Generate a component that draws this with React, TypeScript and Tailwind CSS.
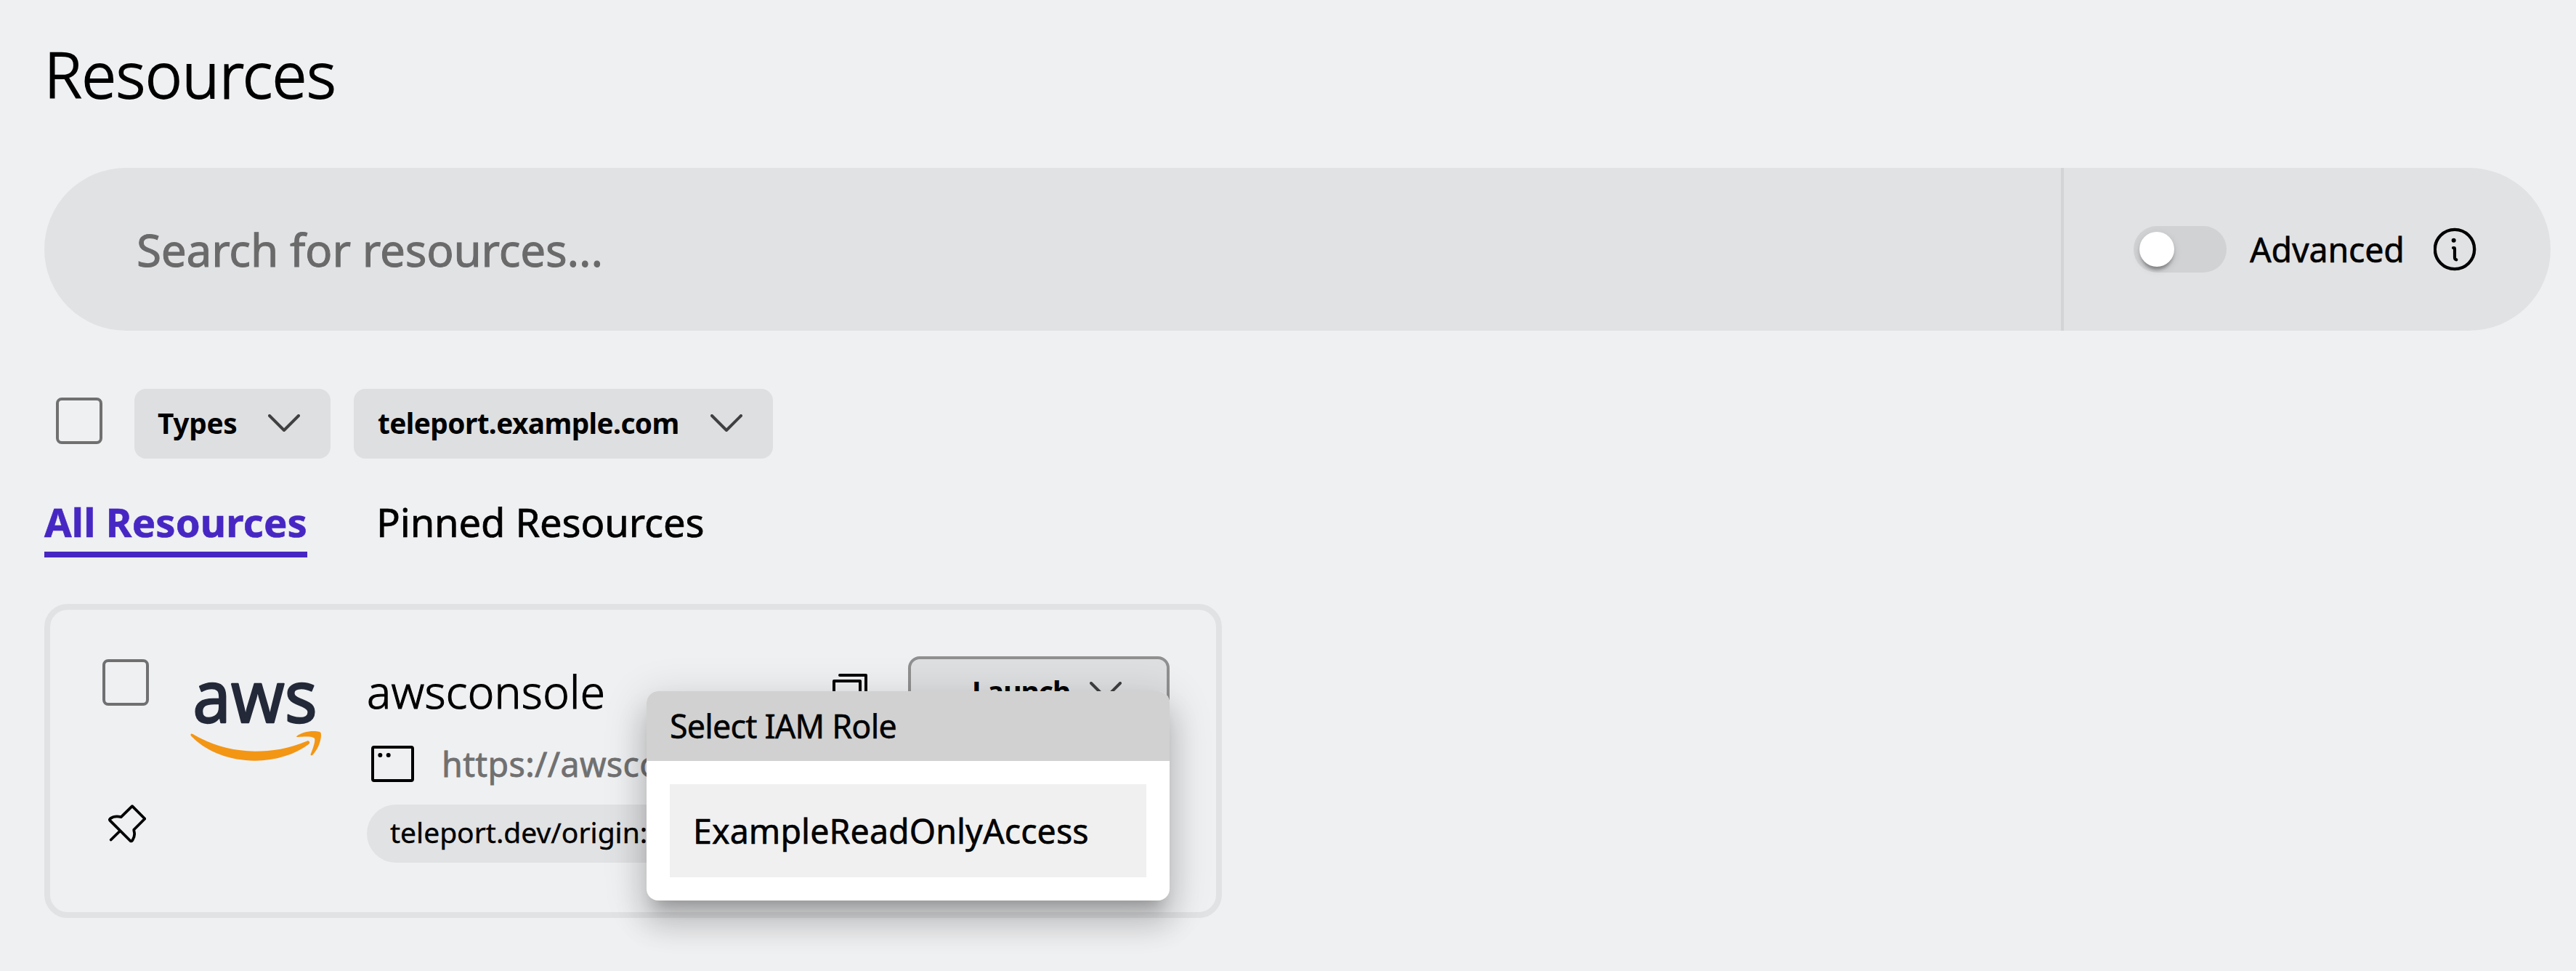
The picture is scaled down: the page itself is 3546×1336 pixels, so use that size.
import React from 'react';

function ChevronDown() {
  return (
    <svg className="h-6 w-11 shrink-0" viewBox="0 0 44 24" fill="none" stroke="#404041" strokeWidth="4" strokeLinecap="round" strokeLinejoin="round">
      <path d="M2 2 22 22 42 2" />
    </svg>
  );
}

function Checkbox({ className = '' }: { className?: string }) {
  return <div role="checkbox" aria-checked="false" className={`size-16 shrink-0 rounded-lg border-4 border-[#707071] ${className}`} />;
}

function InfoIcon() {
  return (
    <svg className="size-[60px] shrink-0" viewBox="0 0 180 180" fill="none" stroke="#000" strokeLinecap="round">
      <circle cx="87" cy="90" r="81.5" strokeWidth="13" />
      <circle cx="83" cy="53" r="9" fill="#000" stroke="none" />
      <path d="M81 84H84Q87 84 87 88V124Q87 132 94 133" strokeWidth="12.5" />
    </svg>
  );
}

function PinIcon() {
  return (
    <svg className="h-[53px] w-[52px]" viewBox="297 860 156 158" fill="none" stroke="#000" strokeWidth="11.5" strokeLinecap="round" strokeLinejoin="round">
      <path d="M396 866 448 918 403 963C402 974 413 982 397 1007Q392 1014 387 1008L304 925Q301 921 306 917C320 907 335 907 350 911Z" />
      <path d="M345 969 308 1005" />
    </svg>
  );
}

function AwsLogo() {
  return (
    <svg className="h-[112px] w-[182px] shrink-0 overflow-visible" viewBox="180 78 546 336">
      <text x="193" y="251" textLength="514" lengthAdjust="spacingAndGlyphs" fontFamily="Noto Sans, sans-serif" fontWeight="400" fontSize="298" fill="#232938" stroke="#232938" strokeWidth="7" strokeLinejoin="round">aws</text>
      <g fill="#f39614">
        <path d="M186 299C183 302 184 306 188 310C250 372 340 409 450 410C535 409 615 385 672 342C680 335 674 325 664 329C590 360 520 371 450 371C355 370 270 345 193 300C190 298 188 298 186 299Z" />
        <path d="M622 309C640 295 665 288 692 288C712 288 721 291 722 296C726 310 718 355 688 386C684 390 678 388 680 383C690 358 700 330 696 318C692 309 655 309 630 312C622 313 620 312 622 309Z" />
      </g>
    </svg>
  );
}

function WindowIcon() {
  return (
    <svg className="h-[50px] w-[59px] shrink-0" viewBox="0 0 177 150" fill="none">
      <rect x="6" y="6" width="165" height="138" rx="6" stroke="#000" strokeWidth="12" />
      <circle cx="37" cy="39" r="9" fill="#000" />
      <circle cx="71" cy="39" r="9" fill="#000" />
    </svg>
  );
}

function CopyIcon() {
  return (
    <svg className="ml-auto size-12 shrink-0" viewBox="0 0 48 48" fill="none" stroke="#000" strokeWidth="4" strokeLinecap="round" strokeLinejoin="round">
      <path d="M10 2H46V38" />
      <path d="M2 10H38V46H2Z" />
    </svg>
  );
}

function SearchBar() {
  return (
    <div className="mt-[81px] flex h-56 w-[3450px] overflow-hidden rounded-full bg-[#e1e2e4]">
      <div className="flex w-[2776px] items-center pl-[127px] text-[62px] leading-none tracking-[-0.2px] text-[#6a6a6b] [-webkit-text-stroke:1px]">Search for resources...</div>
      <div className="flex flex-1 items-center border-l-4 border-[#d3d4d6] pl-24">
        <div role="switch" aria-checked="false" className="flex h-16 w-32 items-center rounded-full bg-[#d1d2d4] pl-2">
          <div className="size-12 rounded-full bg-white shadow-[0_8px_4px_-4px_rgba(0,0,0,0.2),0_4px_4px_rgba(0,0,0,0.14),0_4px_12px_rgba(0,0,0,0.12)]" />
        </div>
        <span className="ml-8 w-[253px] text-[46.5px] leading-none tracking-[-0.15px] [-webkit-text-stroke:0.6px]">Advanced</span>
        <InfoIcon />
      </div>
    </div>
  );
}

function RoleMenu() {
  return (
    <div className="absolute top-[112px] left-[821px] w-[720px] rounded-2xl bg-white shadow-[0_20px_20px_-12px_rgba(0,0,0,0.2),0_32px_40px_4px_rgba(0,0,0,0.14),0_12px_56px_8px_rgba(0,0,0,0.12)]">
      <div className="flex h-24 items-center rounded-t-2xl bg-[#d1d1d1] pl-8 text-[44.8px] leading-none tracking-[-0.8px] [-webkit-text-stroke:0.5px]">Select IAM Role</div>
      <div className="p-8">
        <div className="flex h-32 items-center bg-[#f0f0f0] pl-8 text-[46.5px] leading-none tracking-[0.1px] [-webkit-text-stroke:0.6px]">ExampleReadOnlyAccess</div>
      </div>
    </div>
  );
}

function ResourceCard() {
  return (
    <div className="relative mt-16 flex h-[432px] w-[1621px] rounded-[32px] border-8 border-[#e1e2e4] pt-16 pr-16 pl-[72px]">
      <div className="flex w-[120px] flex-col pt-1">
        <Checkbox />
        <div className="mt-[136px] pl-2"><PinIcon /></div>
      </div>
      <div className="w-[244px] pt-[33px]"><AwsLogo /></div>
      <div className="flex flex-1 flex-col">
        <div className="flex h-24 items-center">
          <span className="text-[62px] leading-none font-light tracking-[0.3px] [-webkit-text-stroke:1.1px]">awsconsole</span>
          <CopyIcon />
          <button className="ml-14 flex h-24 w-[360px] items-center rounded-2xl border-4 border-[#909091] bg-[#dedfe1] pb-0.5 pl-[84px] text-[39px] leading-none font-bold tracking-[-1px]">
            <span className="w-[162px] text-left">Launch</span>
            <ChevronDown />
          </button>
        </div>
        <div className="flex h-[104px] items-center pl-1.5">
          <WindowIcon />
          <span className="ml-[38px] text-[46.5px] leading-none tracking-[0.4px] whitespace-nowrap text-[#707071] [-webkit-text-stroke:0.8px]">https://awsco</span>
        </div>
        <div className="mt-1 flex h-20 w-[480px] items-center rounded-full bg-[#e1e2e4] pb-1.5 pl-8 text-[39px] leading-none [-webkit-text-stroke:0.4px]">teleport.dev/origin:</div>
      </div>
      <RoleMenu />
    </div>
  );
}

export default function App() {
  return (
    <main className="flex h-[1336px] w-[3546px] flex-col overflow-hidden bg-[#eff0f2] pt-[54px] pl-[61px] font-['Noto_Sans',sans-serif] text-black">
      <h1 className="h-24 text-[86px] leading-[96px] font-light tracking-[-0.1px] [-webkit-text-stroke:1.8px]">Resources</h1>
      <SearchBar />
      <div className="mt-20 flex items-start text-[38.8px] leading-none font-bold">
        <Checkbox className="mt-3 ml-4" />
        <button className="ml-11 flex h-24 w-[270px] items-center rounded-2xl bg-[#dedfe1] pb-0.5 pl-8">
          <span className="w-[152px] text-left tracking-[-0.3px]">Types</span>
          <ChevronDown />
        </button>
        <button className="ml-8 flex h-24 w-[577px] items-center rounded-2xl bg-[#dedfe1] pb-0.5 pl-[33px]">
          <span className="w-[458px] text-left tracking-[-0.6px]">teleport.example.com</span>
          <ChevronDown />
        </button>
      </div>
      <div className="mt-[59px] flex h-[77px] gap-[95px] text-[54.4px] leading-[56px]">
        <div className="w-[362px] border-b-8 border-[#4727c3] font-bold tracking-[0.15px] whitespace-nowrap text-[#4727c3] [-webkit-text-stroke:0.6px]">All Resources</div>
        <div className="tracking-[-0.15px] [-webkit-text-stroke:0.7px]">Pinned Resources</div>
      </div>
      <ResourceCard />
    </main>
  );
}
